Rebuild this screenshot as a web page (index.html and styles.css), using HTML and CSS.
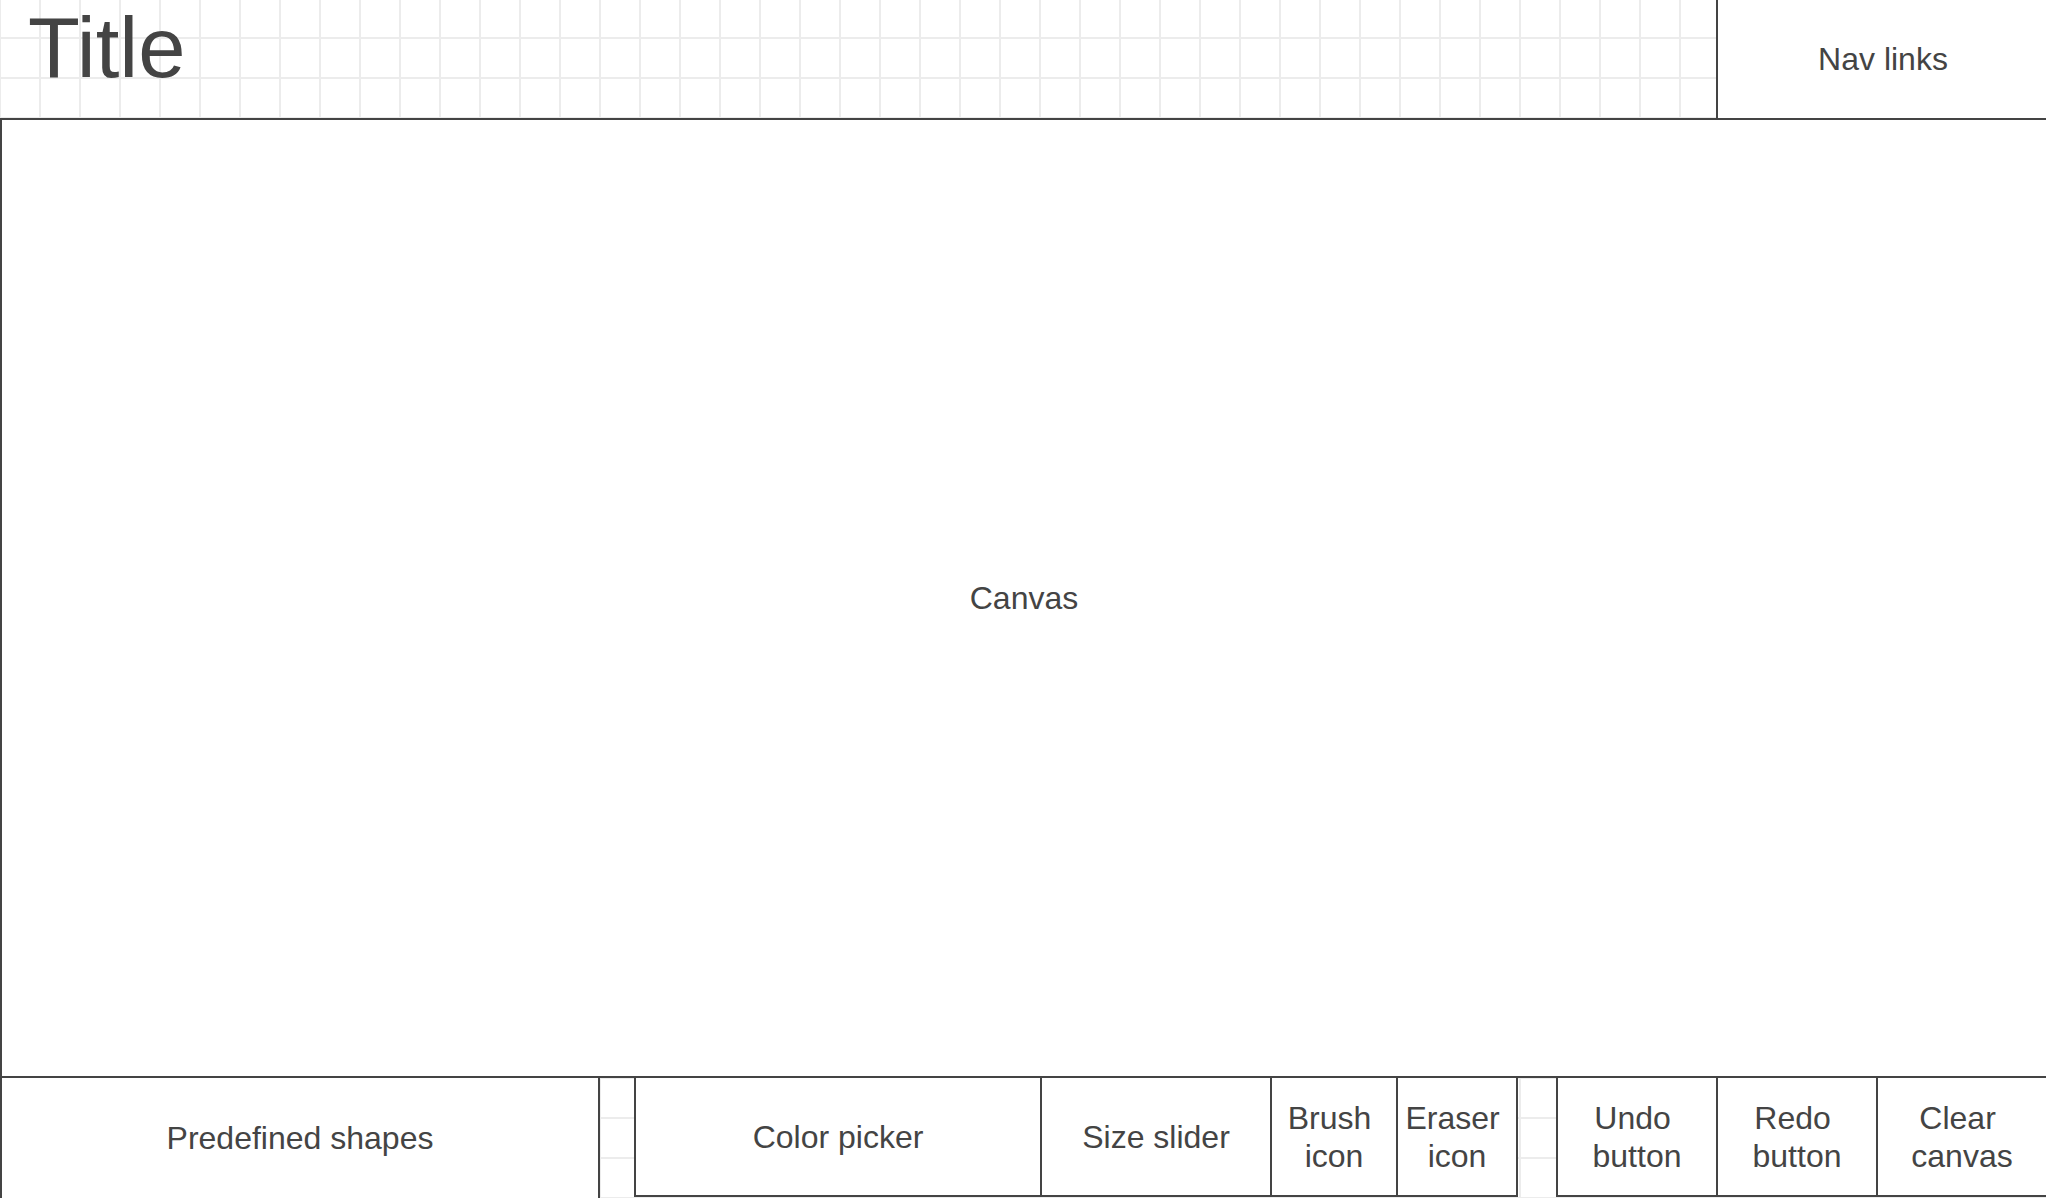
FILE: index.html
```html
<!DOCTYPE html>
<html lang="en">
<head>
<meta charset="utf-8">
<title>Drawing app wireframe</title>
<link rel="stylesheet" href="styles.css">
</head>
<body>
<div class="page">
  <header class="header">
    <h1 class="title">Title</h1>
    <nav class="nav box">Nav links</nav>
  </header>
  <main class="canvas box">Canvas</main>
  <footer class="toolbar">
    <div class="box tool shapes">Predefined shapes</div>
    <div class="spacer spacer-a"></div>
    <div class="group">
      <div class="box tool color first">Color picker</div>
      <div class="box tool size">Size slider</div>
      <div class="box tool brush">Brush icon</div>
      <div class="box tool eraser">Eraser icon</div>
    </div>
    <div class="spacer spacer-b"></div>
    <div class="group">
      <div class="box tool undo first">Undo button</div>
      <div class="box tool redo">Redo button</div>
      <div class="box tool clear">Clear canvas</div>
    </div>
  </footer>
</div>
</body>
</html>
```

FILE: styles.css
```css
html, body {
  margin: 0;
  padding: 0;
}

body {
  width: 2046px;
  height: 1198px;
  overflow: hidden;
  font-family: "Liberation Sans", Arial, sans-serif;
  color: #444;
  background-color: #fff;
  background-image:
    linear-gradient(to right, #ececec 2px, transparent 2px),
    linear-gradient(to bottom, #ececec 2px, transparent 2px);
  background-size: 40px 40px, 40px 40px;
  background-position: -1px 0, 0 -3px;
}

.page {
  width: 2048px;
  display: flex;
  flex-direction: column;
}

.box {
  background: #fff;
  border: 0 solid #444;
  display: flex;
  align-items: center;
  justify-content: center;
  text-align: center;
  box-sizing: border-box;
}

/* Header */
.header {
  display: flex;
  height: 118px;
}

.title {
  flex: 1;
  margin: 0;
  padding-left: 28px;
  font-size: 85px;
  font-weight: normal;
  line-height: 96px;
}

.nav {
  width: 332px;
  border-left-width: 2px;
  font-size: 32px;
}

/* Canvas */
.canvas {
  height: 960px;
  border-width: 2px;
  font-size: 32px;
}

/* Toolbar */
.toolbar {
  display: flex;
  align-items: flex-start;
}

.tool {
  font-size: 32px;
  line-height: 38px;
  height: 119px;
  border-right-width: 2px;
  border-bottom-width: 2px;
  padding: 0 4px;
  white-space: break-spaces;
}

.tool.first {
  border-left-width: 2px;
}

.group {
  display: flex;
}

.spacer {
  flex: none;
  height: 1px;
}

.spacer-a { width: 34px; }
.spacer-b { width: 38px; }

.shapes {
  width: 600px;
  height: 122px;
  border-left-width: 2px;
}

.color  { width: 408px; }
.size   { width: 230px; }
.brush  { width: 126px; }
.eraser { width: 120px; }
.undo   { width: 162px; }
.redo   { width: 160px; }
.clear  { width: 170px; }
```
